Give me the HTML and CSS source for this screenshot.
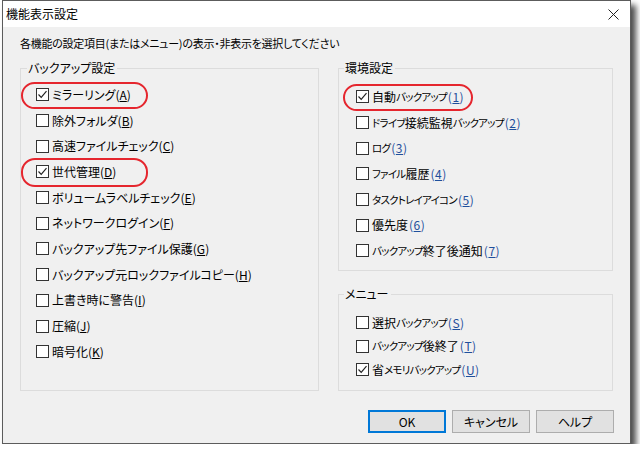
FILE: index.html
```html
<!DOCTYPE html>
<html lang="ja">
<head>
<meta charset="utf-8">
<title>機能表示設定</title>
<link rel="stylesheet" href="styles.css">
</head>
<body>
<div class="dialog">
  <div class="titlebar">
    <span class="title">機能表示設定</span>
    <svg class="close" width="11" height="11" viewBox="0 0 11 11"><path d="M0.5 0.5L10.5 10.5M10.5 0.5L0.5 10.5" stroke="#222" stroke-width="1" fill="none"/></svg>
  </div>
  <div class="content">
    <p class="intro">各機能の設定項目(またはメニュー)の表示・非表示を選択してください</p>
    <div class="groups">
      <fieldset class="group left">
        <legend>バックアップ設定</legend>
        <div class="row"><span class="box checked"><svg width="11" height="11" viewBox="0 0 11 11"><path d="M1.5 5.5L4.2 8.3L9.5 2.2" stroke="#222" stroke-width="1.2" fill="none"/></svg></span>ミラーリング(<u>A</u>)</div>
        <div class="row"><span class="box"></span>除外フォルダ(<u>B</u>)</div>
        <div class="row"><span class="box"></span>高速ファイルチェック(<u>C</u>)</div>
        <div class="row"><span class="box checked"><svg width="11" height="11" viewBox="0 0 11 11"><path d="M1.5 5.5L4.2 8.3L9.5 2.2" stroke="#222" stroke-width="1.2" fill="none"/></svg></span>世代管理(<u>D</u>)</div>
        <div class="row"><span class="box"></span>ボリュームラベルチェック(<u>E</u>)</div>
        <div class="row"><span class="box"></span>ネットワークログイン(<u>F</u>)</div>
        <div class="row"><span class="box"></span>バックアップ先ファイル保護(<u>G</u>)</div>
        <div class="row"><span class="box"></span>バックアップ元ロックファイルコピー(<u>H</u>)</div>
        <div class="row"><span class="box"></span>上書き時に警告(<u>I</u>)</div>
        <div class="row"><span class="box"></span>圧縮(<u>J</u>)</div>
        <div class="row"><span class="box"></span>暗号化(<u>K</u>)</div>
      </fieldset>
      <div class="rightcol">
        <fieldset class="group env">
          <legend>環境設定</legend>
          <div class="row"><span class="box checked"><svg width="11" height="11" viewBox="0 0 11 11"><path d="M1.5 5.5L4.2 8.3L9.5 2.2" stroke="#222" stroke-width="1.2" fill="none"/></svg></span>自動<span class="k">バックアップ</span><span class="key">(<u>1</u>)</span></div>
          <div class="row"><span class="box"></span><span class="k">ドライブ</span>接続監視<span class="k">バックアップ</span><span class="key">(<u>2</u>)</span></div>
          <div class="row"><span class="box"></span><span class="k">ログ</span><span class="key">(<u>3</u>)</span></div>
          <div class="row"><span class="box"></span><span class="k">ファイル</span>履歴<span class="key">(<u>4</u>)</span></div>
          <div class="row"><span class="box"></span><span class="k">タスクトレイアイコン</span><span class="key">(<u>5</u>)</span></div>
          <div class="row"><span class="box"></span>優先度<span class="key">(<u>6</u>)</span></div>
          <div class="row"><span class="box"></span><span class="k">バックアップ</span>終了後通知<span class="key">(<u>7</u>)</span></div>
        </fieldset>
        <fieldset class="group menu">
          <legend>メニュー</legend>
          <div class="row mrow"><span class="box"></span>選択<span class="k">バックアップ</span><span class="key">(<u>S</u>)</span></div>
          <div class="row mrow"><span class="box"></span><span class="k">バックアップ</span>後終了<span class="key">(<u>T</u>)</span></div>
          <div class="row mrow"><span class="box checked"><svg width="11" height="11" viewBox="0 0 11 11"><path d="M1.5 5.5L4.2 8.3L9.5 2.2" stroke="#222" stroke-width="1.2" fill="none"/></svg></span>省<span class="k">メモリバックアップ</span><span class="key">(<u>U</u>)</span></div>
        </fieldset>
      </div>
    </div>
    <div class="buttons">
      <button class="btn default">OK</button>
      <button class="btn">キャンセル</button>
      <button class="btn">ヘルプ</button>
    </div>
  </div>
  <div class="mark m1"></div>
  <div class="mark m2"></div>
  <div class="mark m3"></div>
</div>
</body>
</html>
```

FILE: styles.css
```css
html, body {
  margin: 0;
  padding: 0;
  background: #ffffff;
}
body {
  font-family: "Noto Sans CJK JP", "Noto Sans", sans-serif;
  font-size: 12px;
  color: #000;
  font-feature-settings: "palt";
}
.dialog {
  position: relative;
  margin-left: 2px;
  width: 629px;
  height: 444px;
  box-sizing: border-box;
  border: 1px solid #5c5c5c;
  background: #f0f0f0;
  box-shadow: 5px 5px 6px rgba(0, 0, 0, 0.7);
}
.titlebar {
  height: 26px;
  background: #ffffff;
  display: flex;
  align-items: center;
  justify-content: space-between;
  padding: 0 11px 0 3px;
}
.title {
  font-size: 12px;
  line-height: 16px;
}
.close {
  display: block;
  margin-top: 1px;
}
.content {
  padding: 0 16px 0 17px;
}
.intro {
  margin: 0;
  padding-top: 8px;
  line-height: 16px;
  font-size: 11px;
  letter-spacing: -0.25px;
}
.groups {
  display: flex;
  gap: 19px;
  margin-top: 9px;
}
.group {
  margin: 0;
  border: 1px solid #dcdcdc;
  min-width: 0;
}
.group legend {
  padding: 0 2px 0 1px;
  line-height: 16px;
}
.left {
  width: 299px;
  height: 331px;
  box-sizing: border-box;
  padding: 6px 0 0 15px;
}
.left legend {
  margin-left: -9px;
}
.rightcol {
  display: flex;
  flex-direction: column;
  gap: 15px;
}
.env, .menu {
  width: 275px;
  box-sizing: border-box;
}
.env legend, .menu legend {
  margin-left: -12px;
}
.env {
  height: 211px;
  padding: 8px 0 0 17px;
}
.menu {
  height: 105px;
  padding: 9px 0 0 17px;
}
.row {
  height: 25.7px;
  display: flex;
  align-items: center;
  white-space: nowrap;
  line-height: 16px;
}
.mrow {
  height: 23.5px;
}
.k {
  font-size: 10.5px;
  letter-spacing: -0.75px;
}
.box {
  width: 13px;
  height: 13px;
  box-sizing: border-box;
  border: 1px solid #333;
  background: #fff;
  margin-right: 3px;
  flex: none;
  display: flex;
  align-items: center;
  justify-content: center;
}
.box svg {
  display: block;
}
u {
  text-decoration-thickness: 1px;
  text-underline-offset: 1px;
}
.key {
  color: #1f4f9c;
  margin-left: 1px;
  letter-spacing: 0.5px;
}
.buttons {
  display: flex;
  justify-content: flex-end;
  gap: 6px;
  margin-top: 19px;
}
.btn {
  width: 78px;
  height: 23px;
  box-sizing: border-box;
  border: 1px solid #adadad;
  background: #e1e1e1;
  font-family: "Noto Sans CJK JP", "Noto Sans", sans-serif;
  font-size: 12px;
  font-feature-settings: "palt";
  color: #000;
  padding: 0;
  line-height: 16px;
}
.btn.default {
  border: 2px solid #0078d7;
}
.mark {
  position: absolute;
  border: 2px solid #e5262e;
  border-radius: 14px;
  box-sizing: border-box;
}
.m1 { left: 18px; top: 81px; width: 127px; height: 27px; }
.m2 { left: 18px; top: 157px; width: 127px; height: 29px; }
.m3 { left: 340px; top: 83px; width: 130px; height: 27px; }
```
